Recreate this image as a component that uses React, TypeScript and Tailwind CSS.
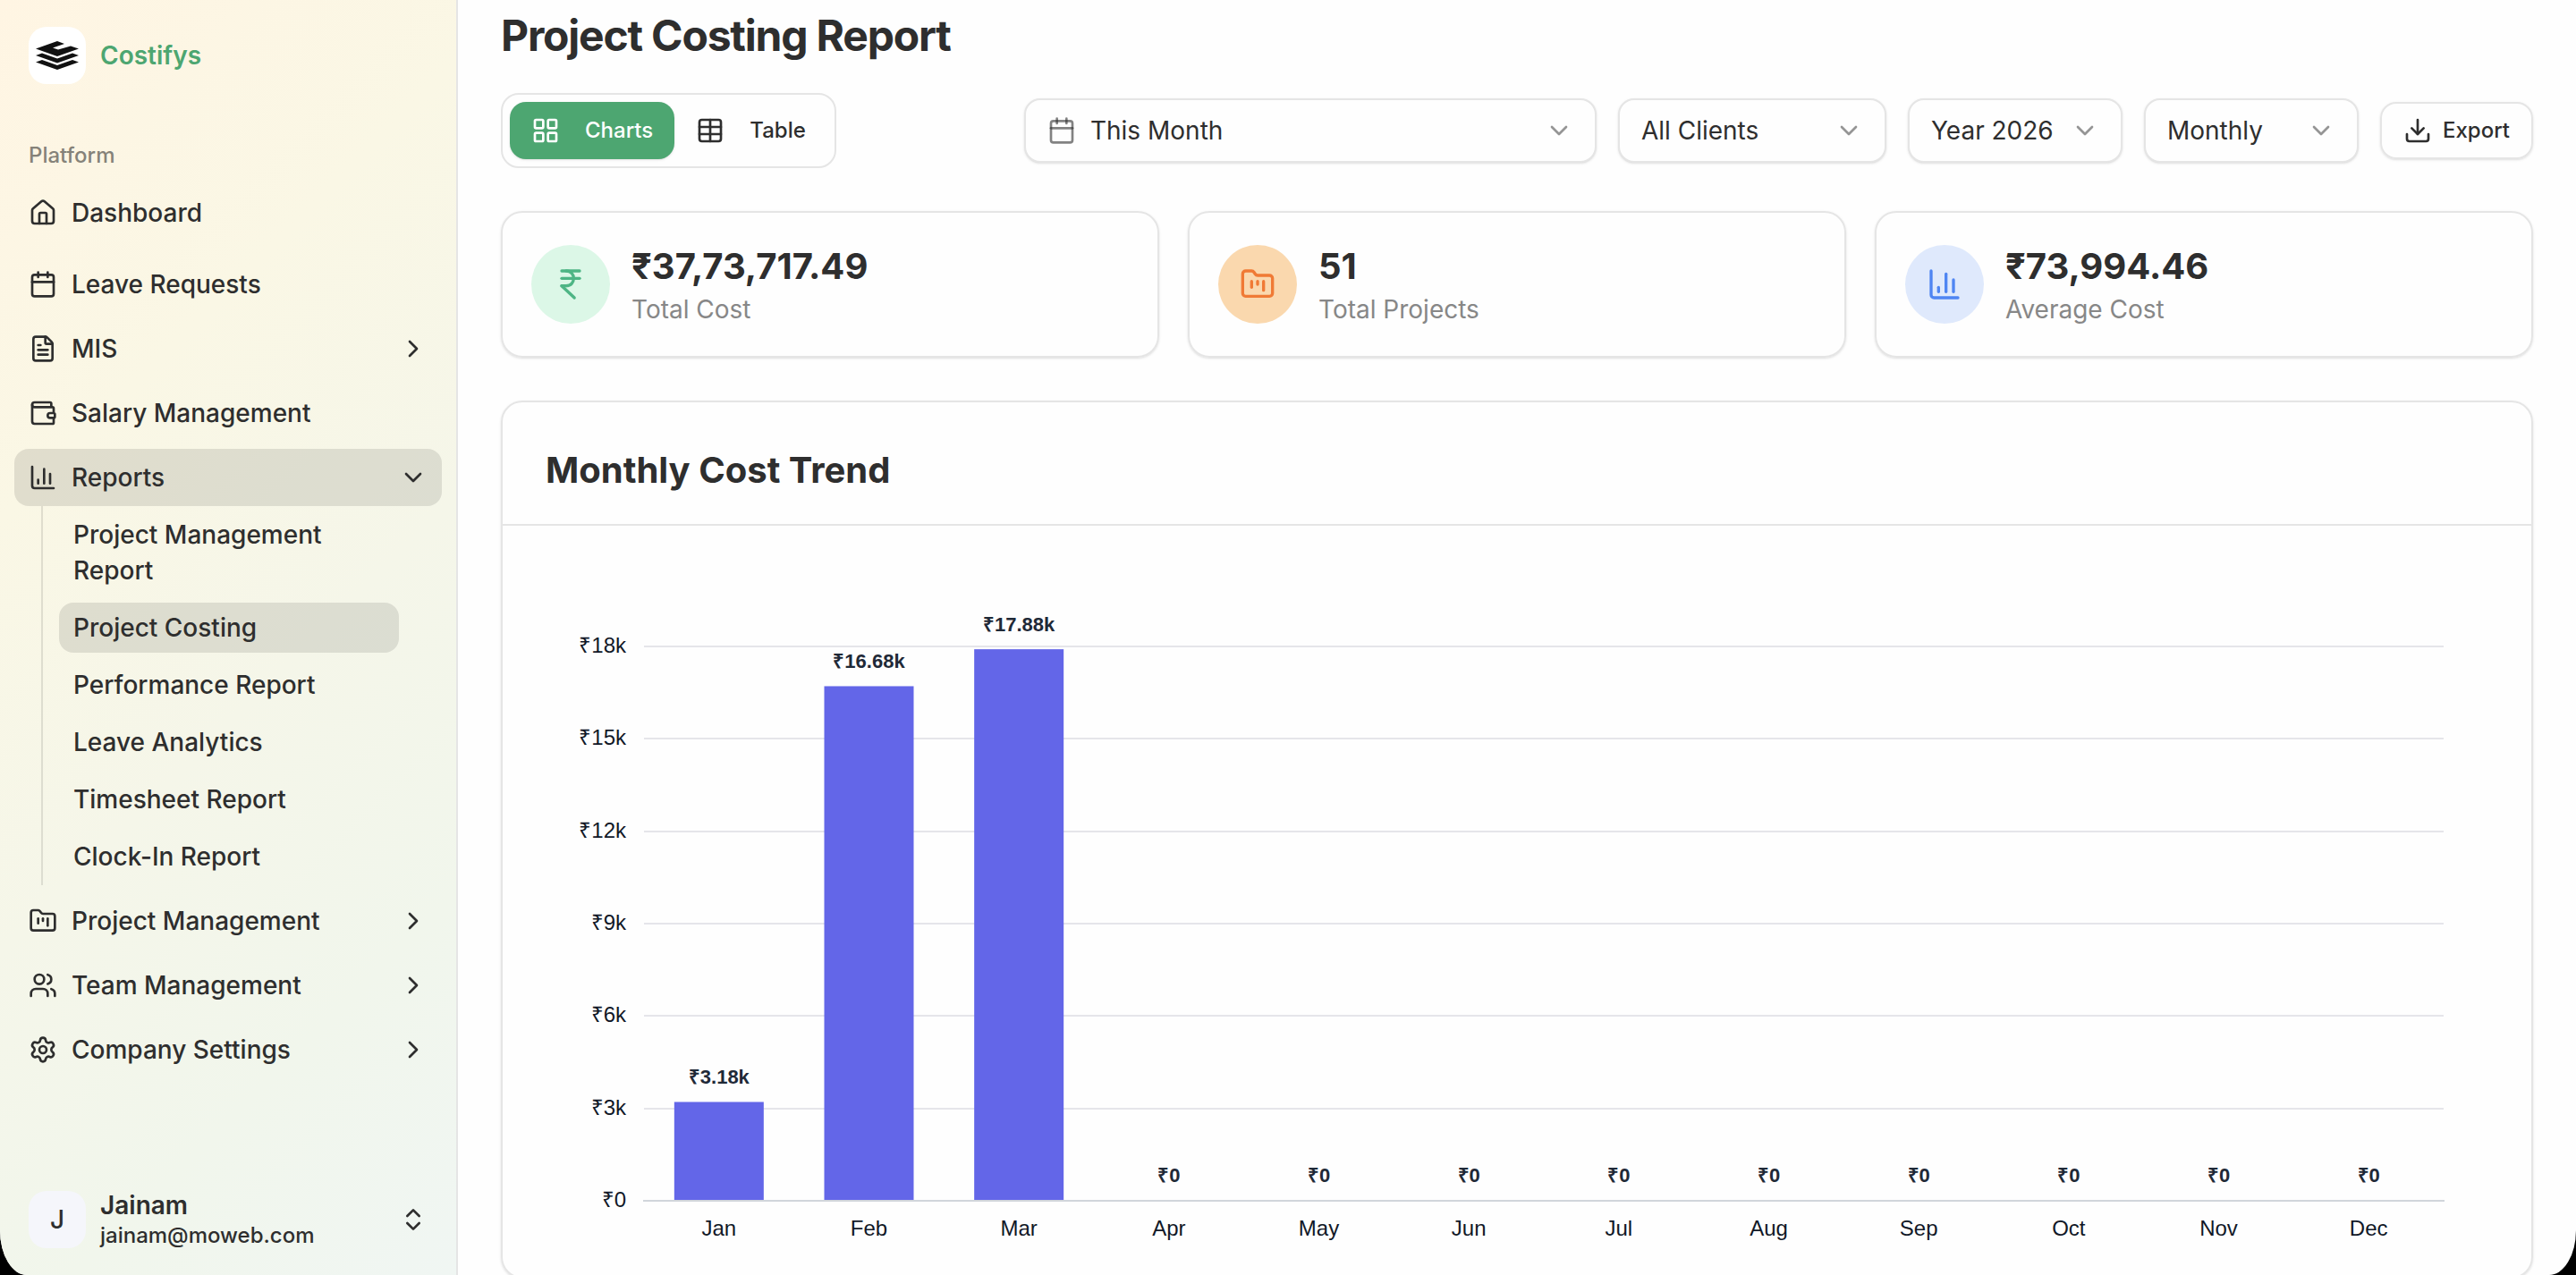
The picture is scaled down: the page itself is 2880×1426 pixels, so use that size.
import React, { useState } from 'react';
import {
  Calendar,
  ChartColumn,
  ChevronDown,
  ChevronRight,
  ChevronsUpDown,
  Download,
  FileText,
  FolderKanban,
  House,
  IndianRupee,
  LayoutGrid,
  Settings,
  Table,
  Users,
  Wallet
} from 'lucide-react';

const reportLinks = [
  'Project Management Report',
  'Project Costing',
  'Performance Report',
  'Leave Analytics',
  'Timesheet Report',
  'Clock-In Report'
];

const filters = [
  { label: 'Client', options: ['All Clients'], width: 'w-[300px]' },
  { label: 'Year', options: ['Year 2026', 'Year 2025'], width: 'w-60' },
  { label: 'Granularity', options: ['Monthly', 'Quarterly'], width: 'w-60' }
];

const stats = [
  { label: 'Total Cost', value: '₹37,73,717.49', icon: IndianRupee, color: 'bg-[#dcf7e7] text-[#4eb585]' },
  { label: 'Total Projects', value: '51', icon: FolderKanban, color: 'bg-[#fad8ae] text-[#f07a35]' },
  { label: 'Average Cost', value: '₹73,994.46', icon: ChartColumn, color: 'bg-[#dfe9fc] text-[#4f85f2]' }
];

const costs = [
  { month: 'Jan', value: 3.18 },
  { month: 'Feb', value: 16.68 },
  { month: 'Mar', value: 17.88 },
  { month: 'Apr', value: 0 },
  { month: 'May', value: 0 },
  { month: 'Jun', value: 0 },
  { month: 'Jul', value: 0 },
  { month: 'Aug', value: 0 },
  { month: 'Sep', value: 0 },
  { month: 'Oct', value: 0 },
  { month: 'Nov', value: 0 },
  { month: 'Dec', value: 0 }
];

function Logo() {
  return (
    <svg viewBox="0 0 48 32" className="w-12 h-8" fill="#111111" aria-hidden="true">
      <path d="M24 0 L32 3 L19 7.500 L25 9.500 L39 5.500 L48 8.500 L24 17 L0 8.500 Z" />
      <path d="M0 16 L7 13.500 L24 19.500 L41 13.500 L48 16 L24 24.500 Z" />
      <path d="M0 23.500 L7 21 L24 27 L41 21 L48 23.500 L24 32 Z" />
    </svg>
  );
}

interface NavItemProps {
  icon: React.ElementType;
  label: string;
  expandable?: boolean;
  open?: boolean;
}

function NavItem({ icon: Icon, label, expandable, open }: NavItemProps) {
  const look = `flex items-center gap-4 w-full h-16 px-4 rounded-2xl text-left ${open ? 'bg-black/10' : ''}`;

  if (!expandable) {
    return (
      <a href="#" className={look}>
        <Icon className="size-8" />
        <span>{label}</span>
      </a>
    );
  }

  return (
    <button type="button" aria-expanded={!!open} className={look}>
      <Icon className="size-8" />
      <span className="flex-1">{label}</span>
      {open ? <ChevronDown className="size-8" /> : <ChevronRight className="size-8" />}
    </button>
  );
}

function Sidebar() {
  return (
    <aside className="flex flex-col shrink-0 w-128 h-full border-r-2 border-[#e5e5e5] text-[28px] font-medium bg-[linear-gradient(135deg,#fff5e3_0%,#faf7e5_30%,#f5f6e9_55%,#f1f6ec_78%,#f0f6f3_100%)]">
      <div className="flex items-center gap-4 px-8 pt-[30px]">
        <div className="flex items-center justify-center size-16 rounded-[20px] bg-white">
          <Logo />
        </div>
        <span className="font-semibold text-[#4da671]">Costifys</span>
      </div>

      <nav className="px-4 mt-12">
        <h2 className="h-16 px-4 leading-[64px] text-2xl text-[#858279]">Platform</h2>
        <NavItem icon={House} label="Dashboard" />
        <div className="flex flex-col gap-2 mt-4">
          <NavItem icon={Calendar} label="Leave Requests" />
          <NavItem icon={FileText} label="MIS" expandable />
          <NavItem icon={Wallet} label="Salary Management" />
          <div>
            <NavItem icon={ChartColumn} label="Reports" expandable open />
            <ul className="flex flex-col gap-2 ml-[30px] mr-12 py-1 pl-[18px] border-l-2 border-black/10">
              {reportLinks.map((link) => (
                <li key={link}>
                  <a
                    href="#"
                    className={`block px-4 py-2 leading-10 rounded-2xl ${link === 'Project Costing' ? 'bg-black/10' : ''}`}
                  >
                    {link}
                  </a>
                </li>
              ))}
            </ul>
          </div>
          <NavItem icon={FolderKanban} label="Project Management" expandable />
          <NavItem icon={Users} label="Team Management" expandable />
          <NavItem icon={Settings} label="Company Settings" expandable />
        </div>
      </nav>

      <button type="button" className="flex items-center gap-4 mt-auto px-8 pb-7 text-left">
        <span className="flex items-center justify-center size-16 rounded-[20px] bg-[#f5f6fb]">J</span>
        <span className="flex flex-col flex-1">
          <span className="leading-9 font-semibold">Jainam</span>
          <span className="leading-8 text-2xl">jainam@moweb.com</span>
        </span>
        <ChevronsUpDown className="size-8" />
      </button>
    </aside>
  );
}

function Toolbar() {
  const [view, setView] = useState('charts');
  const tab = 'flex items-center gap-7 h-16 px-6 rounded-[18px]';
  const activeTab = 'bg-[#4da671] text-white shadow-sm';
  const select = 'w-full h-18 pr-16 rounded-[18px] border-2 border-[#e5e5e5] shadow-sm appearance-none bg-[#fefefe]';

  return (
    <div className="flex items-center justify-between">
      <div className="flex p-2 h-21 items-center rounded-[20px] border-2 border-[#e5e5e5] text-2xl font-medium">
        <button type="button" onClick={() => setView('charts')} className={`${tab} ${view === 'charts' ? activeTab : ''}`}>
          <LayoutGrid className="size-8" />
          Charts
        </button>
        <button type="button" onClick={() => setView('table')} className={`${tab} ${view === 'table' ? activeTab : ''}`}>
          <Table className="size-8" />
          Table
        </button>
      </div>

      <div className="flex items-center gap-6 text-[28px]">
        <div className="relative w-160">
          <Calendar className="absolute left-[26px] top-5 size-8 text-[#2e2e2e]/60" />
          <select aria-label="Period" className={`${select} pl-[72px]`}>
            <option>This Month</option>
            <option>Last Month</option>
          </select>
          <ChevronDown className="absolute right-[26px] top-5 size-8 opacity-50 pointer-events-none" />
        </div>
        {filters.map((filter) => (
          <div key={filter.label} className={`relative ${filter.width}`}>
            <select aria-label={filter.label} className={`${select} pl-6`}>
              {filter.options.map((option) => (
                <option key={option}>{option}</option>
              ))}
            </select>
            <ChevronDown className="absolute right-[26px] top-5 size-8 opacity-50 pointer-events-none" />
          </div>
        ))}
        <button type="button" className="flex items-center gap-3 h-16 px-6 rounded-[18px] border-2 border-[#e5e5e5] shadow-sm text-2xl font-medium">
          <Download className="size-8" />
          Export
        </button>
      </div>
    </div>
  );
}

// Plot area inside the 2268x840 drawing
const PLOT_LEFT = 158;
const PLOT_RIGHT = 2170;
const BASELINE = 755;
const UNIT = 620 / 18;
const BAND = (PLOT_RIGHT - PLOT_LEFT) / 12;
const BAR_WIDTH = 100;

function CostChart() {
  return (
    <svg viewBox="0 0 2268 840" className="block w-full font-['Liberation_Sans',Arial,sans-serif]" role="img" aria-label="Monthly Cost Trend">
      {[0, 3, 6, 9, 12, 15, 18].map((tick) => {
        const y = Math.round(BASELINE - tick * UNIT);
        return (
          <g key={tick}>
            {tick > 0 && <line x1={PLOT_LEFT} x2={PLOT_RIGHT} y1={y} y2={y} stroke="#e5e5ea" strokeWidth={2} />}
            <text x={138} y={y + 7} textAnchor="end" fontSize={24} fill="#111827">
              {tick ? `₹${tick}k` : '₹0'}
            </text>
          </g>
        );
      })}
      {costs.map(({ month, value }, index) => {
        const center = PLOT_LEFT + BAND * (index + 0.5);
        const top = BASELINE - 1 - value * UNIT;
        return (
          <g key={month}>
            <rect x={center - BAR_WIDTH / 2} y={top} width={BAR_WIDTH} height={value * UNIT} fill="#6366e8" />
            <text x={center} y={top - 20} textAnchor="middle" fontSize={22} fontWeight={700} fill="#1f2937">
              {value ? `₹${value}k` : '₹0'}
            </text>
            <text x={center} y={794} textAnchor="middle" fontSize={24} fill="#111827">
              {month}
            </text>
          </g>
        );
      })}
      <line x1={PLOT_LEFT - 1} x2={PLOT_RIGHT + 1} y1={BASELINE} y2={BASELINE} stroke="#d1d5db" strokeWidth={2} />
    </svg>
  );
}

function App() {
  return (
    <div className="h-screen bg-black font-['Inter',sans-serif] text-[#2e2e2e]">
      <div className="flex h-full overflow-hidden bg-[#fefefe] [border-bottom-left-radius:30px_50px] [border-bottom-right-radius:30px_50px]">
        <Sidebar />

        <main className="flex-1 px-12 pt-3 overflow-hidden">
          <h1 className="mb-9 text-5xl leading-14 font-bold tracking-tight">Project Costing Report</h1>
          <Toolbar />

          {/* Summary cards */}
          <div className="grid grid-cols-3 gap-8 mt-12">
            {stats.map(({ label, value, icon: Icon, color }) => (
              <div key={label} className="flex items-center gap-6 h-41 px-8 rounded-3xl border-2 border-[#e5e5e5] shadow-sm">
                <div className={`flex items-center justify-center size-22 rounded-full ${color}`}>
                  <Icon className="size-10" />
                </div>
                <div>
                  <p className="text-[40px] leading-14 font-bold">{value}</p>
                  <p className="text-[28px] leading-10 text-[#878787]">{label}</p>
                </div>
              </div>
            ))}
          </div>

          {/* Trend chart */}
          <section className="mt-12 rounded-3xl border-2 border-[#e5e5e5] shadow-sm">
            <h2 className="px-12 pt-12 pb-8 border-b-2 border-[#e5e5e5] text-[40px] leading-14 font-bold">Monthly Cost Trend</h2>
            <CostChart />
          </section>
        </main>
      </div>
    </div>
  );
}

export default App;
